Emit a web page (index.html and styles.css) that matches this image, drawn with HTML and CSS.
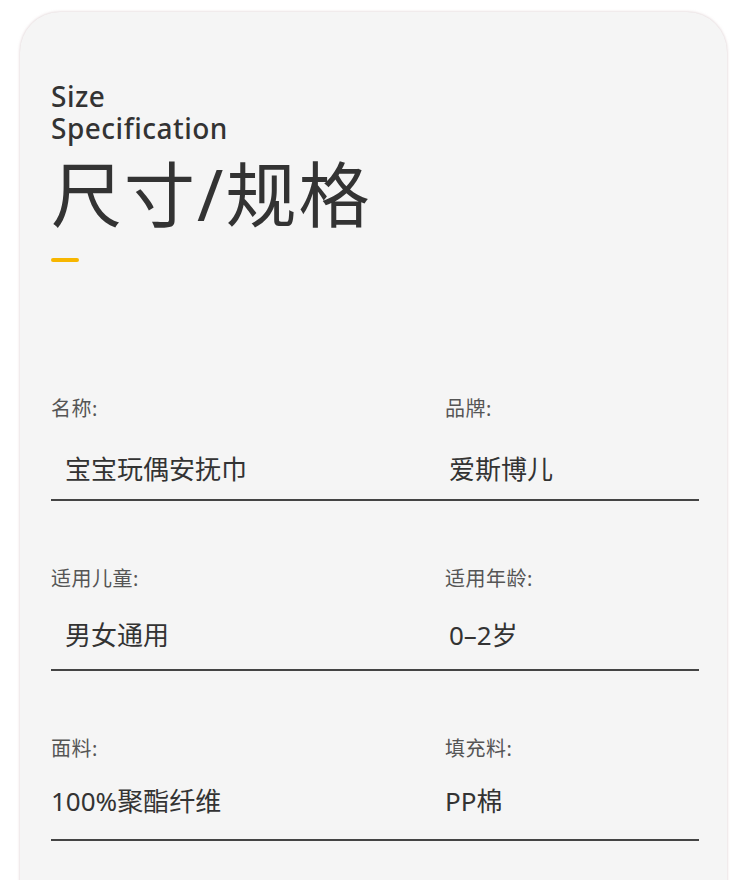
FILE: index.html
```html
<!DOCTYPE html>
<html lang="zh-CN">
<head>
    <meta charset="UTF-8">
    <meta name="viewport" content="width=device-width, initial-scale=1.0">
    <title>尺寸/规格</title>
    <link rel="stylesheet" href="styles.css">
</head>
<body>
    <div class="card">
        <div class="heading">
            <p class="heading-en">Size</p>
            <p class="heading-en">Specification</p>
            <h1 class="heading-cn">尺寸/规格</h1>
            <span class="accent"></span>
        </div>

        <div class="spec-row first">
            <div class="field left">
                <div class="label">名称:</div>
                <div class="value indent">宝宝玩偶安抚巾</div>
            </div>
            <div class="field">
                <div class="label">品牌:</div>
                <div class="value nudge">爱斯博儿</div>
            </div>
        </div>

        <div class="spec-row second">
            <div class="field left">
                <div class="label">适用儿童:</div>
                <div class="value indent">男女通用</div>
            </div>
            <div class="field">
                <div class="label">适用年龄:</div>
                <div class="value nudge">0–2岁</div>
            </div>
        </div>

        <div class="spec-row third">
            <div class="field left">
                <div class="label">面料:</div>
                <div class="value">100%聚酯纤维</div>
            </div>
            <div class="field">
                <div class="label">填充料:</div>
                <div class="value">PP棉</div>
            </div>
        </div>
    </div>
</body>
</html>
```

FILE: styles.css
```css
body {
    margin: 0;
    padding: 0;
    background-color: #ffffff;
    font-family: "Noto Sans", "Noto Sans CJK SC", sans-serif;
    color: #333333;
}

.card {
    margin: 12px 23px 0 20px;
    padding: 68px 28px 80px 31px;
    background-color: #f5f5f5;
    border-radius: 40px 40px 0 0;
    box-shadow: 0 0 3px rgba(190, 160, 165, 0.6);
}

.heading-en {
    margin: 0;
    font-size: 28px;
    line-height: 32px;
    font-weight: 500;
    letter-spacing: 0.5px;
    color: #333333;
}

.heading-cn {
    margin: 8px 0 0 0;
    font-size: 71px;
    line-height: 84px;
    font-weight: 400;
    letter-spacing: 2px;
    color: #333333;
}

.accent {
    display: block;
    width: 28px;
    height: 4px;
    margin-top: 22px;
    border-radius: 2px;
    background-color: #f7b600;
}

.spec-row {
    display: flex;
    margin-top: 64px;
    padding-bottom: 12px;
    border-bottom: 2px solid #444444;
}

.spec-row.first {
    margin-top: 133px;
}

.field {
    flex: 1;
}

.field.left {
    flex: 0 0 394px;
}

.label {
    font-size: 20px;
    line-height: 28px;
    letter-spacing: 0.5px;
    color: #555555;
}

.value {
    margin-top: 28px;
    font-size: 26px;
    line-height: 36px;
    color: #333333;
}

.second .value {
    margin-top: 24px;
    padding-bottom: 4px;
}

.third .value {
    margin-top: 20px;
    padding-bottom: 8px;
}

.value.indent {
    padding-left: 14px;
}

.value.nudge {
    padding-left: 4px;
}
```
